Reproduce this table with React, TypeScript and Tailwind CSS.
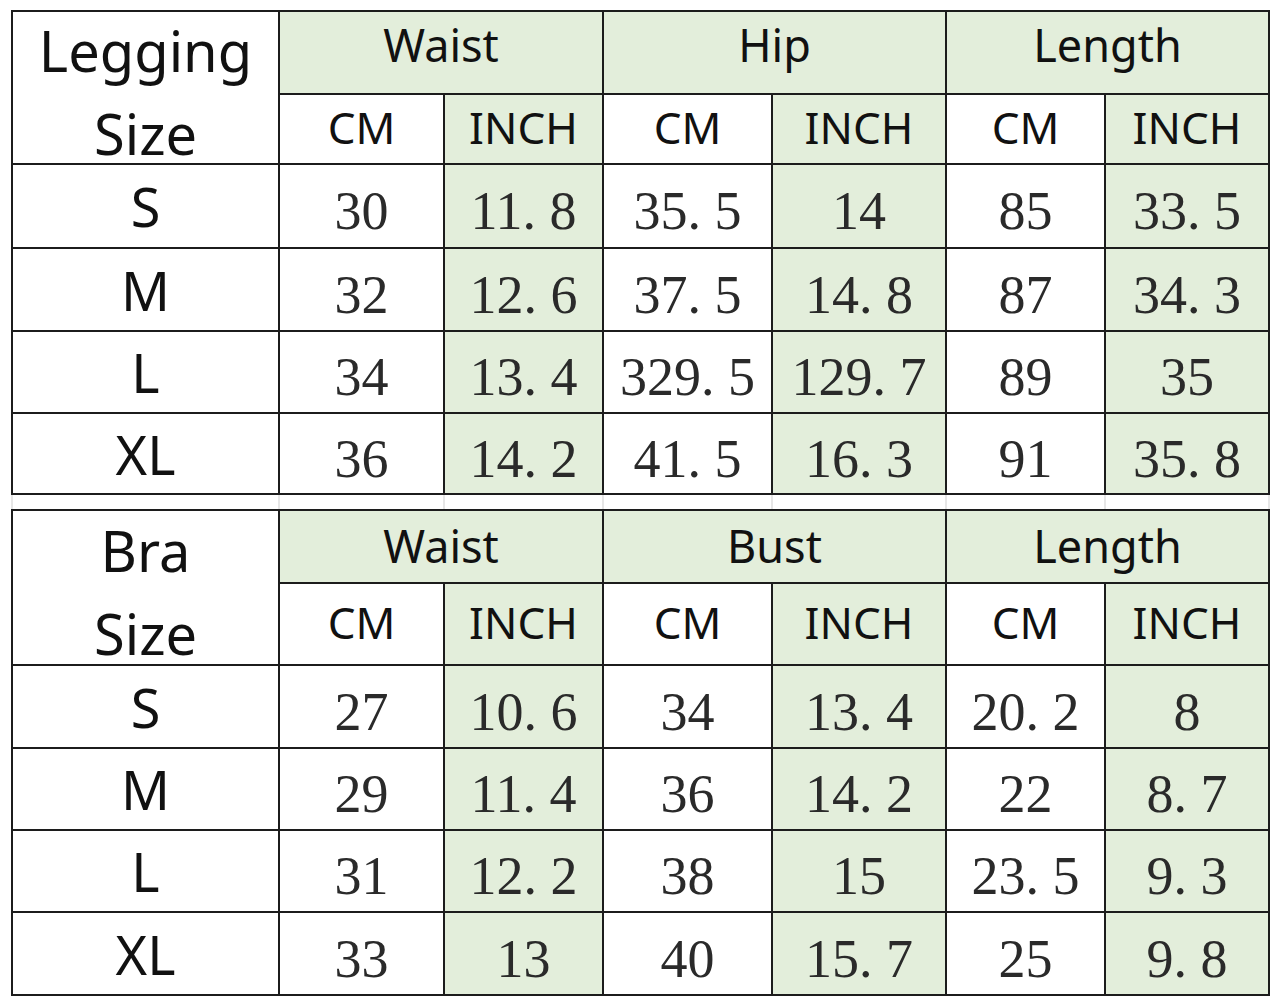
import React from "react";

const SANS = "font-['Noto_Sans','Open_Sans',sans-serif]";
const SERIF = "font-['Liberation_Serif','Times_New_Roman',serif]";
const GREEN = "bg-[#e3eedb]";

type Row = { size: string; vals: string[] };

function Num({ v }: { v: string }) {
  const parts = v.split(".");
  if (parts.length === 1) return <>{v}</>;
  return (
    <>
      {parts[0]}
      <span className="inline-block w-[0.5em] text-left">.</span>
      {parts[1]}
    </>
  );
}

function SizeTable({
  title,
  mid,
  rows,
  rowsClass,
  headerPad,
}: {
  title: string;
  mid: string;
  rows: Row[];
  rowsClass: string;
  headerPad: string;
}) {
  const headers = ["Waist", mid, "Length"];
  return (
    <div
      className={`grid w-fit grid-cols-[265px_163px_157px_167px_172px_157px_162px] ${rowsClass} gap-[2px] bg-[#1c1c1c] p-[2px]`}
    >
      <div
        className={`row-span-2 flex flex-col items-center justify-center bg-white pt-[8px] text-[56px] leading-[83px] text-[#111] ${SANS}`}
      >
        <span>{title}</span>
        <span>Size</span>
      </div>
      {headers.map((h) => (
        <div
          key={h}
          className={`col-span-2 flex items-center justify-center ${GREEN} ${headerPad} text-[45px] leading-none text-[#111] ${SANS}`}
        >
          {h}
        </div>
      ))}
      {[0, 1, 2].map((i) => (
        <React.Fragment key={i}>
          <div
            className={`flex items-center justify-center bg-white pb-[4px] text-[44px] leading-none text-[#111] ${SANS}`}
          >
            CM
          </div>
          <div
            className={`flex items-center justify-center ${GREEN} pb-[4px] text-[44px] leading-none text-[#111] ${SANS}`}
          >
            INCH
          </div>
        </React.Fragment>
      ))}
      {rows.map((r) => (
        <React.Fragment key={r.size}>
          <div
            className={`flex items-center justify-center bg-white text-[54px] leading-none text-[#111] ${SANS}`}
          >
            {r.size}
          </div>
          {r.vals.map((v, i) => (
            <div
              key={i}
              className={`flex items-center justify-center whitespace-nowrap pt-[10px] text-[54px] leading-none text-[#2a2a2a] ${SERIF} ${
                i % 2 === 1 ? GREEN : "bg-white"
              }`}
            >
              <Num v={v} />
            </div>
          ))}
        </React.Fragment>
      ))}
    </div>
  );
}

const legging: Row[] = [
  { size: "S", vals: ["30", "11.8", "35.5", "14", "85", "33.5"] },
  { size: "M", vals: ["32", "12.6", "37.5", "14.8", "87", "34.3"] },
  { size: "L", vals: ["34", "13.4", "329.5", "129.7", "89", "35"] },
  { size: "XL", vals: ["36", "14.2", "41.5", "16.3", "91", "35.8"] },
];

const bra: Row[] = [
  { size: "S", vals: ["27", "10.6", "34", "13.4", "20.2", "8"] },
  { size: "M", vals: ["29", "11.4", "36", "14.2", "22", "8.7"] },
  { size: "L", vals: ["31", "12.2", "38", "15", "23.5", "9.3"] },
  { size: "XL", vals: ["33", "13", "40", "15.7", "25", "9.8"] },
];

export default function App() {
  return (
    <div className="h-[998px] w-[1280px] overflow-hidden bg-white pl-[11px] pt-[10px]">
      <SizeTable
        title="Legging"
        mid="Hip"
        rows={legging}
        rowsClass="grid-rows-[81px_68px_82px_81px_80px_79px]"
        headerPad="pb-[16px]"
      />
      <div className="grid h-[14px] w-fit grid-cols-[265px_163px_157px_167px_172px_157px_162px] gap-x-[2px] bg-[#e6e6e6] px-[2px]">
        {[0, 1, 2, 3, 4, 5, 6].map((i) => (
          <div key={i} className="bg-white" />
        ))}
      </div>
      <SizeTable
        title="Bra"
        mid="Bust"
        rows={bra}
        rowsClass="grid-rows-[71px_80px_81px_80px_80px_81px]"
        headerPad="pb-[2px]"
      />
    </div>
  );
}
